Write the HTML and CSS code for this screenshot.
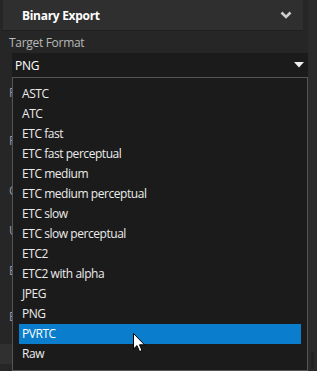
FILE: index.html
```html
<!DOCTYPE html>
<html lang="en">
<head>
  <meta charset="UTF-8" />
  <title>Binary Export</title>
  <meta name="viewport" content="width=device-width, initial-scale=1.0" />
  <link rel="stylesheet" href="styles.css">
</head>
<body>
  <div class="page">
    <div class="panel">
      <div class="panel-header">
        <span class="panel-title">Binary Export</span>
        <svg class="chevron" width="12" height="8" viewBox="0 0 12 8">
          <path d="M1.5 1.5 L6 6 L10.5 1.5" fill="none" stroke="#cfcfcf" stroke-width="2.6" />
        </svg>
      </div>

      <div class="fields">
        <div class="field-label">Target Format</div>
        <div class="select">
          <span>PNG</span>
          <svg class="caret" width="10" height="6" viewBox="0 0 10 6">
            <path d="M0 0 H10 L5 5.5 Z" fill="#f0f0f0" />
          </svg>
        </div>

        <!-- rows covered by the open list -->
        <div class="field-label behind r1">Pixel Format</div>
        <div class="field-label behind r2">Filter</div>
        <div class="field-label behind r3">Compression</div>
        <div class="field-label behind r4">Usage</div>
        <div class="field-label behind r5">Encoding</div>
        <div class="field-label behind r6">Export Path</div>
        <div class="input-stub"></div>

        <!-- open dropdown -->
        <div class="dropdown">
          <div class="option">ASTC</div>
          <div class="option">ATC</div>
          <div class="option">ETC fast</div>
          <div class="option">ETC fast perceptual</div>
          <div class="option">ETC medium</div>
          <div class="option">ETC medium perceptual</div>
          <div class="option">ETC slow</div>
          <div class="option">ETC slow perceptual</div>
          <div class="option">ETC2</div>
          <div class="option">ETC2 with alpha</div>
          <div class="option">JPEG</div>
          <div class="option">PNG</div>
          <div class="option selected">PVRTC</div>
          <div class="option">Raw</div>
        </div>

        <svg class="cursor" width="13" height="20" viewBox="0 0 13 20">
          <path d="M0.5 0.5 V16 L4 12.6 L6.6 18.6 L9 17.6 L6.5 11.8 H11.5 Z" fill="#ffffff" stroke="#000000" stroke-width="1" />
        </svg>
      </div>
    </div>
    <div class="scrollbar"><div class="scroll-thumb"></div></div>
  </div>
</body>
</html>
```

FILE: styles.css
```css
html, body {
  margin: 0;
  padding: 0;
  background: #262626;
  font-family: "Open Sans", "Noto Sans", sans-serif;
  font-size: 12px;
  color: #e8e8e8;
  overflow: hidden;
}

.page {
  display: flex;
  height: 371px;
}

.panel {
  flex: 1;
  position: relative;
}

.panel-header {
  display: flex;
  align-items: center;
  justify-content: space-between;
  height: 30px;
  margin: 0 5px 0 3px;
  padding: 0 11px 0 19px;
  background: #2f2f2f;
  border-bottom: 1px solid #1f1f1f;
}

.panel-title {
  font-weight: bold;
  font-size: 12px;
  color: #ffffff;
  letter-spacing: -0.3px;
}

.chevron {
  display: block;
}

.fields {
  position: relative;
  padding: 3px 0 0 9px;
}

.field-label {
  color: #b9b9b9;
  font-size: 12px;
  line-height: 18px;
  letter-spacing: -0.3px;
}

.select {
  display: flex;
  align-items: center;
  justify-content: space-between;
  height: 24px;
  width: 296px;
  margin: 1px 0 0 3px;
  padding: 0 4px 0 3px;
  box-sizing: border-box;
  background: #1b1b1b;
  color: #ffffff;
  letter-spacing: -0.2px;
}

.caret {
  display: block;
}

.behind {
  color: #8f9db0;
  white-space: nowrap;
}

.r1 { margin-top: 7px; }
.r2 { margin-top: 30px; }
.r3 { margin-top: 32px; }
.r4 { margin-top: 22px; }
.r5 { margin-top: 22px; }
.r6 { margin-top: 28px; }

.input-stub {
  width: 12px;
  height: 20px;
  margin: 18px 0 0 -9px;
  background: #303030;
}

.dropdown {
  position: absolute;
  top: 46px;
  left: 12px;
  width: 296px;
  box-sizing: border-box;
  padding: 6px;
  background: #1b1b1b;
  border: 1px solid #555555;
}

.option {
  height: 20px;
  line-height: 20px;
  padding-left: 3px;
  color: #ececec;
  letter-spacing: -0.45px;
  white-space: nowrap;
}

.option.selected {
  background: #0a7ecc;
  color: #ffffff;
}

.cursor {
  position: absolute;
  top: 302px;
  left: 133px;
}

.scrollbar {
  width: 9px;
  background: #2a2a2a;
  position: relative;
}

.scroll-thumb {
  position: absolute;
  left: 3px;
  top: 352px;
  width: 3px;
  height: 17px;
  background: #232323;
}
```
